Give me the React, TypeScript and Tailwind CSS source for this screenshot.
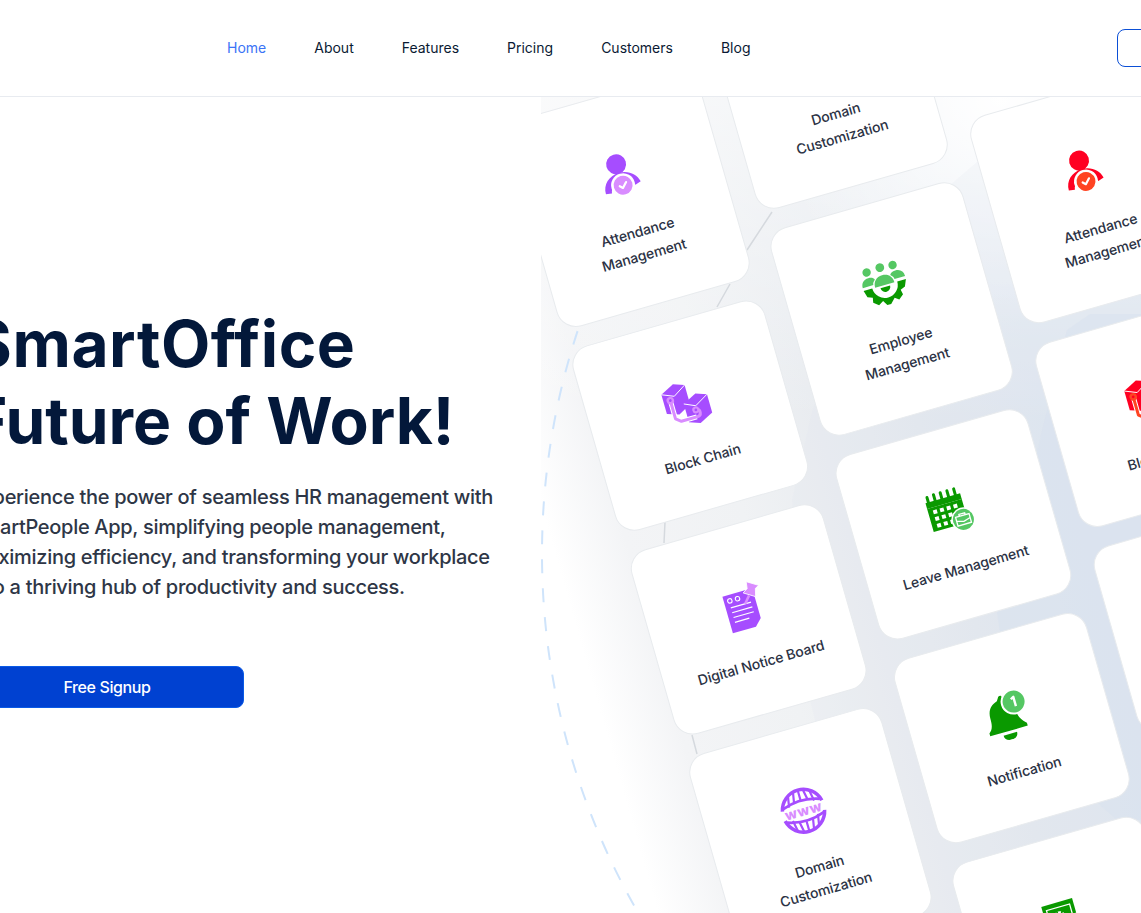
const navLinks = ['Home', 'About', 'Features', 'Pricing', 'Customers', 'Blog']

const PURPLE = { main: '#a64dff', light: '#d98cff' }
const GREEN = { main: '#0a9900', light: '#55c763' }
const RED = { main: '#ff0022', light: '#ff4422' }

type Tone = { main: string; light: string }

function AttendanceIcon({ tone }: { tone: Tone }) {
  return (
    <svg viewBox="0 0 48 48" className="w-12 h-12">
      <circle cx="22" cy="11" r="10" fill={tone.main} />
      <path d="M4 37c0-10 8-17 18-17s17 6 19 14l-6 2c-2-5-7-9-13-9s-11 5-12 11z" fill={tone.main} />
      <circle cx="23" cy="33" r="12" fill="#fff" />
      <circle cx="23" cy="33" r="9.5" fill={tone.light} />
      <path d="M19.5 33l2.6 2.6 4.6-4.8" fill="none" stroke="#fff" strokeWidth="2.2" strokeLinecap="round" strokeLinejoin="round" />
    </svg>
  )
}

function BlockIcon({ tone }: { tone: Tone }) {
  return (
    <svg viewBox="0 0 48 48" className="w-12 h-12">
      <path d="M2 9L16 2l11 4v20l-13 7-12-4z" fill={tone.main} />
      <path d="M21 24l14-7 11 4v19l-14 7-11-4z" fill={tone.main} />
      <path d="M2 9l12 5 13-8" fill="none" stroke="#fff" strokeWidth="0.9" />
      <path d="M21 24l11 5 14-8" fill="none" stroke="#fff" strokeWidth="0.9" />
      <path d="M9 18v18l5 4h16" fill="none" stroke="#fff" strokeWidth="5" />
      <path d="M9 18v18l5 4h17c4 0 5-6 1-7" fill="none" stroke={tone.light} strokeWidth="3" strokeLinejoin="round" />
      <circle cx="9" cy="17" r="3.8" fill={tone.light} />
      <circle cx="9" cy="17" r="1.4" fill={tone.main} />
      <circle cx="31" cy="33" r="3.6" fill={tone.light} />
      <circle cx="31" cy="33" r="1.4" fill={tone.main} />
    </svg>
  )
}

function NoticeIcon({ tone }: { tone: Tone }) {
  return (
    <svg viewBox="0 0 48 48" className="w-12 h-12">
      <path d="M5 8h26l5 5v26l-7 7H5z" fill={tone.main} />
      <circle cx="11" cy="14" r="2.2" fill="none" stroke="#fff" strokeWidth="1.1" />
      <circle cx="19" cy="14" r="2.2" fill="none" stroke="#fff" strokeWidth="1.1" />
      <path d="M10 21h21M10 26h21M10 31h21M10 36h15" stroke="#fff" strokeWidth="1.2" />
      <path d="M32 0l11 7-4 2-2 8-11-7 5-3z" fill={tone.light} stroke="#fff" strokeWidth="0.8" />
      <path d="M31 14l-6 7" stroke={tone.light} strokeWidth="2.5" />
    </svg>
  )
}

function DomainIcon({ tone }: { tone: Tone }) {
  return (
    <svg viewBox="0 0 48 48" className="w-12 h-12">
      <g fill="none" stroke={tone.main}>
        <path d="M3.5 19A21 21 0 0 1 44.5 19" strokeWidth="3.5" />
        <path d="M5 17Q24 10 43 17" strokeWidth="2.8" />
        <path d="M13 6l-2 11M19 3l-2 11M24 3v10M29 3l2 11M35 6l2 11" strokeWidth="2.2" />
        <path d="M3.5 29A21 21 0 0 0 44.5 29" strokeWidth="3.5" />
        <path d="M5 31Q24 38 43 31" strokeWidth="2.8" />
        <path d="M13 42l-2-11M19 45l-2-11M24 45v-10M29 45l2-11M35 42l2-11" strokeWidth="2.2" />
      </g>
      <text x="24" y="29" textAnchor="middle" fontSize="14" fontWeight="800" letterSpacing="0.6" fill={tone.light} className="font-['Inter',sans-serif]">
        www
      </text>
    </svg>
  )
}

function EmployeeIcon({ tone }: { tone: Tone }) {
  return (
    <svg viewBox="0 0 48 48" className="w-12 h-12">
      <circle cx="10" cy="7" r="4.2" fill={tone.light} />
      <circle cx="24" cy="6" r="4.4" fill={tone.light} />
      <circle cx="37" cy="7" r="4.2" fill={tone.light} />
      <path d="M2 21c0-5 3-8 8-8 3 0 5 1 6 3-2 2-3 3-3 5z" fill={tone.light} />
      <path d="M46 21c0-5-3-8-8-8-3 0-5 1-6 3 2 2 3 3 3 5z" fill={tone.light} />
      <path d="M14 24c0-6 4-10 10-10s10 4 10 10z" fill={tone.light} />
      <path d="M2 24h8l1 0a13 13 0 0 0 26 0h9l-3 7-5 2 1 5-5 4-4-3-5 5h-4l-3-5-5 3-5-4 1-5-5-2z" fill={tone.main} />
      <path d="M19 26h10a5 5 0 0 1-10 0z" fill={tone.main} />
    </svg>
  )
}

function LeaveIcon({ tone }: { tone: Tone }) {
  return (
    <svg viewBox="0 0 48 48" className="w-12 h-12">
      <path d="M3 9h36v6H3z" fill={tone.main} />
      <path d="M6 4v8M13 3v8M20 3v8M27 3v8M34 3v8" stroke={tone.main} strokeWidth="3" strokeLinecap="round" />
      <path d="M3 15h36v22a2 2 0 0 1-2 2H3z" fill={tone.main} />
      <path
        d="M8 18h4v4H8zM15 18h4v4h-4zM22 18h4v4h-4zM29 18h4v4h-4zM8 25h4v4H8zM15 25h4v4h-4zM22 25h4v4h-4zM8 32h4v4H8zM15 32h4v4h-4zM22 32h4v4h-4z"
        fill="#fff"
      />
      <circle cx="35" cy="35" r="12" fill="#fff" />
      <circle cx="35" cy="35" r="10.5" fill={tone.light} />
      <path d="M28 31h14v9H28zM32 31v-2h6v2M28 35l7 2 7-2" fill="none" stroke="#fff" strokeWidth="1.3" />
    </svg>
  )
}

function BellIcon({ tone }: { tone: Tone }) {
  return (
    <svg viewBox="0 0 48 48" className="w-12 h-12">
      <path d="M19 4c1-2 4-2 4 1v3c7 2 10 8 10 15 0 5 3 9 7 13v3H1v-3c4-3 5-7 5-14 0-8 4-13 11-15z" fill={tone.main} />
      <path d="M14 42h14c0 4-3 6-7 6s-7-2-7-6z" fill={tone.main} />
      <circle cx="33" cy="12" r="13" fill="#fff" />
      <circle cx="33" cy="12" r="11" fill={tone.light} />
      <path d="M31 9l3-1.6V17" fill="none" stroke="#fff" strokeWidth="2.4" strokeLinejoin="round" />
    </svg>
  )
}

function MoneyIcon({ tone }: { tone: Tone }) {
  return (
    <svg viewBox="0 0 48 48" className="w-12 h-12">
      <path d="M3 5h32v28H3z" fill={tone.main} />
      <path d="M7 10h24v19H7z" fill="none" stroke="#fff" strokeWidth="1.3" />
      <circle cx="18" cy="20" r="5" fill="none" stroke="#fff" strokeWidth="2" strokeDasharray="3 1.5" />
      <circle cx="36" cy="33" r="13" fill="#fff" />
      <circle cx="36" cy="33" r="11" fill={tone.light} />
    </svg>
  )
}

function FeatureCard({ icon, lines }: { icon: React.ReactNode; lines: string }) {
  return (
    <div className="flex flex-col items-center w-[200px] pt-[58px] pb-[38px] px-[30px] bg-white rounded-[20px] border border-[#e8ebee]">
      {icon}
      <p className="mt-[22px] text-center text-sm leading-6 tracking-[-0.1px] font-medium text-[#2b3244]">{lines}</p>
    </div>
  )
}

export default function App() {
  return (
    <div className="w-[1141px] h-[913px] overflow-hidden flex flex-col bg-white font-['Inter',sans-serif]">
      {/* Header */}
      <header className="h-[97px] shrink-0 flex items-center pl-[227px] border-b border-[#e8ebf0]">
        <nav className="flex items-center gap-12 text-sm font-normal text-[#0a1a33]">
          {navLinks.map((link) => (
            <a key={link} className={link === 'Home' ? 'text-[#3b74f6]' : ''}>
              {link}
            </a>
          ))}
        </nav>
        <div className="ml-auto -mr-[76px] w-[100px] h-[38px] shrink-0 rounded-lg border border-[#0b4fd6]" />
      </header>

      <main className="flex flex-1 min-h-0">
        {/* Hero copy */}
        <section className="w-[541px] shrink-0 pt-[208px]">
          <div className="-ml-[30px] w-[560px]">
            <h1 className="text-[64px] leading-[77px] font-bold text-[#03183a] whitespace-nowrap">
              <span className="tracking-[0.55px]">SmartOffice</span>
              <br />
              Future of Work!
            </h1>
            <p className="mt-[23px] text-xl leading-[30px] font-medium tracking-[-0.3px] text-[#2e3646] whitespace-nowrap">
              Experience the power of seamless HR management with
              <br />
              SmartPeople App, simplifying people management,
              <br />
              maximizing efficiency, and transforming your workplace
              <br />
              into a thriving hub of productivity and success.
            </p>
            <button className="mt-16 w-[274px] h-[42px] rounded-lg bg-[#0041d1] border border-[#0a5ae6] text-white text-base font-medium tracking-[-0.4px]">
              Free Signup
            </button>
          </div>
        </section>

        {/* Rotated feature grid */}
        <section className="relative flex-1 overflow-hidden bg-[radial-gradient(circle_230px_at_459px_0px,#ffffff,transparent),linear-gradient(to_bottom,rgba(255,255,255,0.6),transparent_40%),linear-gradient(74deg,#ffffff_14%,#f3f4f6_23%,#f0f2f4_38%,#e9ecf0_50%,#e3e8ee_62%,#dde5ef_78%)]">
          <svg className="absolute inset-0 w-full h-full" viewBox="0 0 600 816">
            <polygon points="409,88 436,65 600,65 600,816 319,816 274,623 269,603 251,403 272,310" fill="#dfe6ee" opacity="0.2" />
            <polygon points="549,217 526,233 456,516 459,535 559,708 576,723 600,723 600,217" fill="#d8e2ee" opacity="0.55" />
            <circle cx="718" cy="457" r="717" fill="none" stroke="#cfe4fb" strokeWidth="2" strokeDasharray="14 15" />
            <path d="M176 210l13-23M206 153l25-38M124 425l-1 21M151 638l5 19" stroke="#d5d9de" strokeWidth="1.5" fill="none" />
          </svg>
          <div className="relative w-[1000px] h-[1300px] -ml-[272px] -mt-[62px] origin-top-left rotate-[-16deg] flex items-start gap-[23px] pl-[200px] pt-[150px]">
            <div className="flex flex-col gap-[20px]">
              <FeatureCard icon={<AttendanceIcon tone={PURPLE} />} lines="Attendance Management" />
              <FeatureCard icon={<BlockIcon tone={PURPLE} />} lines="Block Chain" />
              <FeatureCard icon={<NoticeIcon tone={PURPLE} />} lines="Digital Notice Board" />
              <FeatureCard icon={<DomainIcon tone={PURPLE} />} lines="Domain Customization" />
            </div>
            <div className="flex flex-col gap-[20px] -mt-[59px]">
              <FeatureCard icon={<DomainIcon tone={GREEN} />} lines="Domain Customization" />
              <FeatureCard icon={<EmployeeIcon tone={GREEN} />} lines="Employee Management" />
              <FeatureCard icon={<LeaveIcon tone={GREEN} />} lines="Leave Management" />
              <FeatureCard icon={<BellIcon tone={GREEN} />} lines="Notification" />
              <FeatureCard icon={<MoneyIcon tone={GREEN} />} lines="Payroll" />
            </div>
            <div className="flex flex-col gap-[20px] mt-[124px]">
              <FeatureCard icon={<AttendanceIcon tone={RED} />} lines="Attendance Management" />
              <FeatureCard icon={<BlockIcon tone={RED} />} lines="Block Chain" />
              <FeatureCard icon={<NoticeIcon tone={RED} />} lines="Digital Notice Board" />
            </div>
          </div>
        </section>
      </main>
    </div>
  )
}
